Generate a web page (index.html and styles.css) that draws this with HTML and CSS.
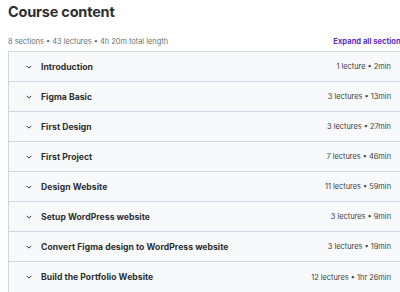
FILE: index.html
```html
<!DOCTYPE html>
<html>
<head>
<meta charset="utf-8">
<link rel="stylesheet" href="styles.css">
</head>
<body>
<div class="wrap">
  <h2 class="title">Course content</h2>
  <div class="summary">
    <span class="stats">8 sections • 43 lectures • 4h 20m total length</span>
    <span class="expand">Expand all sections</span>
  </div>
  <div class="sections">
    <div class="row"><svg class="chev" viewBox="0 0 8 5"><path d="M1 1 L4 4 L7 1" fill="none" stroke="#2d2f31" stroke-width="1.3"/></svg><span class="name">Introduction</span><span class="meta">1 lecture • 2min</span></div>
    <div class="row"><svg class="chev" viewBox="0 0 8 5"><path d="M1 1 L4 4 L7 1" fill="none" stroke="#2d2f31" stroke-width="1.3"/></svg><span class="name">Figma Basic</span><span class="meta">3 lectures • 13min</span></div>
    <div class="row"><svg class="chev" viewBox="0 0 8 5"><path d="M1 1 L4 4 L7 1" fill="none" stroke="#2d2f31" stroke-width="1.3"/></svg><span class="name">First Design</span><span class="meta">3 lectures • 27min</span></div>
    <div class="row"><svg class="chev" viewBox="0 0 8 5"><path d="M1 1 L4 4 L7 1" fill="none" stroke="#2d2f31" stroke-width="1.3"/></svg><span class="name">First Project</span><span class="meta">7 lectures • 46min</span></div>
    <div class="row"><svg class="chev" viewBox="0 0 8 5"><path d="M1 1 L4 4 L7 1" fill="none" stroke="#2d2f31" stroke-width="1.3"/></svg><span class="name">Design Website</span><span class="meta">11 lectures • 59min</span></div>
    <div class="row"><svg class="chev" viewBox="0 0 8 5"><path d="M1 1 L4 4 L7 1" fill="none" stroke="#2d2f31" stroke-width="1.3"/></svg><span class="name">Setup WordPress website</span><span class="meta">3 lectures • 9min</span></div>
    <div class="row"><svg class="chev" viewBox="0 0 8 5"><path d="M1 1 L4 4 L7 1" fill="none" stroke="#2d2f31" stroke-width="1.3"/></svg><span class="name">Convert Figma design to WordPress website</span><span class="meta">3 lectures • 19min</span></div>
    <div class="row"><svg class="chev" viewBox="0 0 8 5"><path d="M1 1 L4 4 L7 1" fill="none" stroke="#2d2f31" stroke-width="1.3"/></svg><span class="name">Build the Portfolio Website</span><span class="meta">12 lectures • 1hr 26min</span></div>
  </div>
</div>
</body>
</html>
```
FILE: styles.css
```css
html, body { margin: 0; padding: 0; overflow: hidden; background: #fff; }
body { padding: 0 0 0 8px; font-family: "Inter", "Noto Sans", sans-serif; color: #2d2f31; }
.wrap { width: 397px; }
.title { margin: 0; padding-top: 3px; font-size: 14.5px; line-height: 17px; font-weight: 700; letter-spacing: -0.2px; }
.summary { display: flex; justify-content: space-between; align-items: center; margin-top: 15px; height: 12px; font-size: 7.4px; }
.stats { color: #6a6f73; }
.expand { color: #5a2fc8; font-weight: 700; font-size: 7.6px; }
.sections { margin-top: 4px; border: 1px solid #d1d7dc; border-right: none; }
.row { display: flex; align-items: center; height: 29px; background: #f7f9fa; border-bottom: 1px solid #d1d7dc; padding: 0 14px 0 17px; }
.row:last-child { border-bottom: none; height: 30px; }
.chev { width: 6px; height: 4px; margin-right: 9px; }
.name { font-size: 8.6px; font-weight: 700; flex: 1; letter-spacing: 0.05px; }
.meta { font-size: 7.4px; color: #3e4143; }
```
